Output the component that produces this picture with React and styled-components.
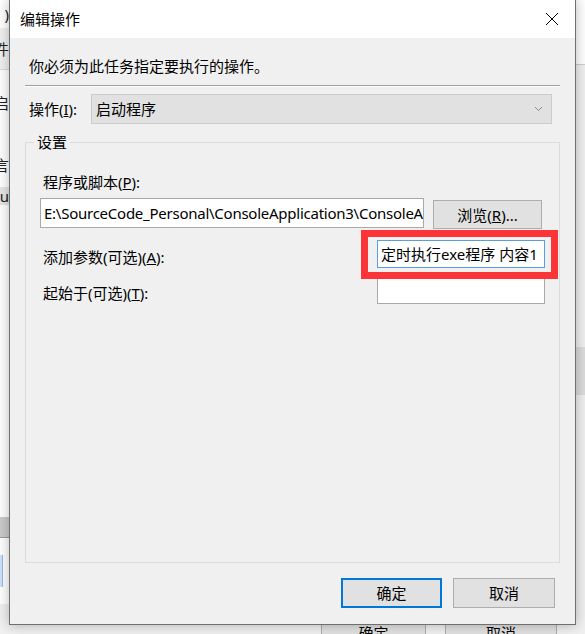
import React from 'react'
import styled, { createGlobalStyle } from 'styled-components'

const GlobalStyle = createGlobalStyle`
  html, body {
    margin: 0;
    padding: 0;
    background: #f0f0f0;
    overflow: hidden;
  }
  body {
    font-family: "Noto Sans", "Noto Sans CJK SC", sans-serif;
    font-size: 15px;
    color: #000;
  }
`

const font = `"Noto Sans", "Noto Sans CJK SC", sans-serif`

export default function App() {
  return (
    <>
      <GlobalStyle />
      <Desktop>
        <SideStrip>
          <StripRow $h={28} $bg="#ffffff" $align="flex-end">)</StripRow>
          <StripRow $h={42} $bg="#f0f0f0" $border="#dadada" $align="flex-end">件</StripRow>
          <StripRow $h={65} $bg="#ffffff" $align="flex-end">启</StripRow>
          <StripRow $h={15} $bg="#ffffff" />
          <StripRow $h={28} $bg="#ffffff" $align="flex-end">言</StripRow>
          <StripRow $h={9} $bg="#ffffff" />
          <StripRow $h={18} $bg="#e6e6e6" $align="flex-end">u</StripRow>
          <StripRow $h={312} $bg="#ffffff" />
          <StripRow $h={21} $bg="#cacaca" $border="#9a9a9a" />
          <StripRow $h={66} $bg="#ffffff">
            <BlueEdge />
          </StripRow>
          <StripRow $h={30} $bg="#f0f0f0" />
        </SideStrip>

        <Middle>
          <Covered />
          <BackButtons>
            <BackButton $w={105}>确定</BackButton>
            <BackButton $w={112}>取消</BackButton>
          </BackButtons>
        </Middle>

        <SideStrip>
          <StripRow $h={65} $bg="#ffffff" $border="#cfcfcf" />
          <StripRow $h={282} $bg="#f0f0f0" />
          <StripRow $h={48} $bg="#dcdcdc" />
          <StripRow $h={239} $bg="#f0f0f0" />
        </SideStrip>

        <Dialog>
          <TitleBar>
            <Title>编辑操作</Title>
            <CloseButton aria-label="关闭">
              <svg width="14" height="14" viewBox="0 0 14 14">
                <path d="M1 1 L13 13 M13 1 L1 13" stroke="#000" strokeWidth="1" fill="none" />
              </svg>
            </CloseButton>
          </TitleBar>

          <Body>
            <Instruction>你必须为此任务指定要执行的操作。</Instruction>
            <Separator />

            <ActionRow>
              <Label>
                操作(<u>I</u>):
              </Label>
              <ComboBox>
                <span>启动程序</span>
                <svg width="9" height="6" viewBox="0 0 9 6">
                  <path d="M1 1 L4.5 4.5 L8 1" stroke="#8a8a8a" strokeWidth="1" fill="none" />
                </svg>
              </ComboBox>
            </ActionRow>

            <GroupBox>
              <Legend>设置</Legend>
              <Label $indent>
                程序或脚本(<u>P</u>):
              </Label>
              <PathRow>
                <TextBox $w={384} $h={30} $tight>
                  E:\SourceCode_Personal\ConsoleApplication3\ConsoleApplication3\bin\Debug\ConsoleApplication3.exe
                </TextBox>
                <Button $w={109} $h={29} $top={2}>
                  浏览(<u>R</u>)...
                </Button>
              </PathRow>

              <FieldGrid>
                <FieldLabel>
                  添加参数(可选)(<u>A</u>):
                </FieldLabel>
                <Highlighted>
                  <TextBox $w={168} $h={28} $focused>
                    定时执行exe程序 内容1
                  </TextBox>
                  <RedMark />
                </Highlighted>
                <FieldLabel>
                  起始于(可选)(<u>T</u>):
                </FieldLabel>
                <TextBox $w={168} $h={28} />
              </FieldGrid>
            </GroupBox>

            <Footer>
              <Button $w={101} $h={30} $default>
                确定
              </Button>
              <Button $w={102} $h={30}>
                取消
              </Button>
            </Footer>
          </Body>
        </Dialog>
      </Desktop>
    </>
  )
}

const Desktop = styled.div`
  position: relative;
  width: 585px;
  height: 634px;
  display: flex;
  overflow: hidden;
  font-family: ${font};
`

const SideStrip = styled.div`
  width: 9px;
  flex: none;
  display: flex;
  flex-direction: column;
  overflow: hidden;
`

const StripRow = styled.div`
  height: ${({ $h }) => $h}px;
  flex: none;
  box-sizing: border-box;
  background: ${({ $bg }) => $bg};
  border-bottom: ${({ $border }) => ($border ? `1px solid ${$border}` : 'none')};
  display: flex;
  align-items: center;
  justify-content: ${({ $align }) => $align || 'flex-start'};
  font-size: 15px;
  color: #222;
  white-space: nowrap;
  overflow: hidden;
`

const BlueEdge = styled.div`
  width: 2px;
  height: 32px;
  background: #cfe3f7;
  border-right: 1px solid #8fbbe8;
`

const Middle = styled.div`
  flex: 1;
  display: flex;
  flex-direction: column;
  background: #f0f0f0;
`

const Covered = styled.div`
  height: 625px;
  flex: none;
`

const BackButtons = styled.div`
  display: flex;
  gap: 19px;
  padding-left: 312px;
  height: 9px;
  overflow: visible;
`

const BackButton = styled.div`
  width: ${({ $w }) => $w}px;
  height: 30px;
  margin-top: -8px;
  box-sizing: border-box;
  background: #e1e1e1;
  border: 1px solid #adadad;
  display: flex;
  align-items: center;
  justify-content: center;
  font-size: 15px;
`

const Dialog = styled.div`
  position: absolute;
  left: 9px;
  top: -1px;
  width: 567px;
  height: 626px;
  box-sizing: border-box;
  border: 1px solid #6f6f6f;
  background: #f0f0f0;
  box-shadow: 0 0 12px rgba(0, 0, 0, 0.28);
  display: flex;
  flex-direction: column;
`

const TitleBar = styled.div`
  height: 38px;
  flex: none;
  background: #ffffff;
  display: flex;
  align-items: center;
  justify-content: space-between;
  padding: 0 9px 0 10px;
`

const Title = styled.div`
  font-size: 15px;
  line-height: 20px;
`

const CloseButton = styled.div`
  width: 28px;
  height: 28px;
  display: flex;
  align-items: center;
  justify-content: center;
`

const Body = styled.div`
  flex: 1;
  display: flex;
  flex-direction: column;
  padding: 18px 15px 0 15px;
`

const Instruction = styled.div`
  padding-left: 4px;
  line-height: 20px;
  height: 20px;
`

const Separator = styled.div`
  margin-top: 9px;
  height: 1px;
  background: #a0a0a0;
  border-bottom: 1px solid #ffffff;
`

const ActionRow = styled.div`
  margin-top: 7px;
  display: flex;
  align-items: center;
`

const Label = styled.div`
  line-height: 20px;
  white-space: nowrap;
  padding-left: ${({ $indent }) => ($indent ? 3 : 4)}px;
  width: ${({ $indent }) => ($indent ? 'auto' : '62px')};
`

const ComboBox = styled.div`
  width: 461px;
  height: 30px;
  box-sizing: border-box;
  background: #e1e1e1;
  border: 1px solid #cccccc;
  display: flex;
  align-items: center;
  justify-content: space-between;
  padding: 0 8px 0 4px;
  line-height: 20px;
`

const GroupBox = styled.div`
  position: relative;
  margin-top: 18px;
  height: 421px;
  box-sizing: border-box;
  border: 1px solid #dcdcdc;
  padding: 29px 14px 0 14px;
  display: flex;
  flex-direction: column;
`

const Legend = styled.div`
  position: absolute;
  left: 8px;
  top: -11px;
  padding: 0 3px;
  background: #f0f0f0;
  line-height: 20px;
`

const PathRow = styled.div`
  margin-top: 6px;
  display: flex;
  align-items: flex-start;
  gap: 9px;
`

const TextBox = styled.div`
  width: ${({ $w }) => $w}px;
  height: ${({ $h }) => $h}px;
  flex: none;
  box-sizing: border-box;
  background: #ffffff;
  border: 1px solid ${({ $focused }) => ($focused ? '#5a9ee0' : '#a9a9a9')};
  padding: 0 3px;
  display: flex;
  align-items: center;
  white-space: nowrap;
  overflow: hidden;
  line-height: 20px;
  letter-spacing: ${({ $tight }) => ($tight ? '-0.25px' : 'normal')};
`

const Button = styled.div`
  width: ${({ $w }) => $w}px;
  height: ${({ $h }) => $h}px;
  margin-top: ${({ $top }) => $top || 0}px;
  flex: none;
  box-sizing: border-box;
  background: #e1e1e1;
  border: ${({ $default }) => ($default ? '2px solid #0078d7' : '1px solid #adadad')};
  display: flex;
  align-items: center;
  justify-content: center;
  line-height: 20px;
  white-space: nowrap;
`

const FieldGrid = styled.div`
  margin-top: 11px;
  display: grid;
  grid-template-columns: 1fr 168px;
  row-gap: 8px;
`

const FieldLabel = styled.div`
  padding-left: 3px;
  margin-top: 7px;
  line-height: 20px;
  white-space: nowrap;
`

const Highlighted = styled.div`
  position: relative;
  z-index: 1;
`

const RedMark = styled.div`
  position: absolute;
  left: -16px;
  top: -10px;
  width: 197px;
  height: 49px;
  box-sizing: border-box;
  border: 7px solid #fb3438;
  pointer-events: none;
`

const Footer = styled.div`
  margin-top: 15px;
  display: flex;
  justify-content: flex-end;
  gap: 11px;
  padding-right: 5px;
`
